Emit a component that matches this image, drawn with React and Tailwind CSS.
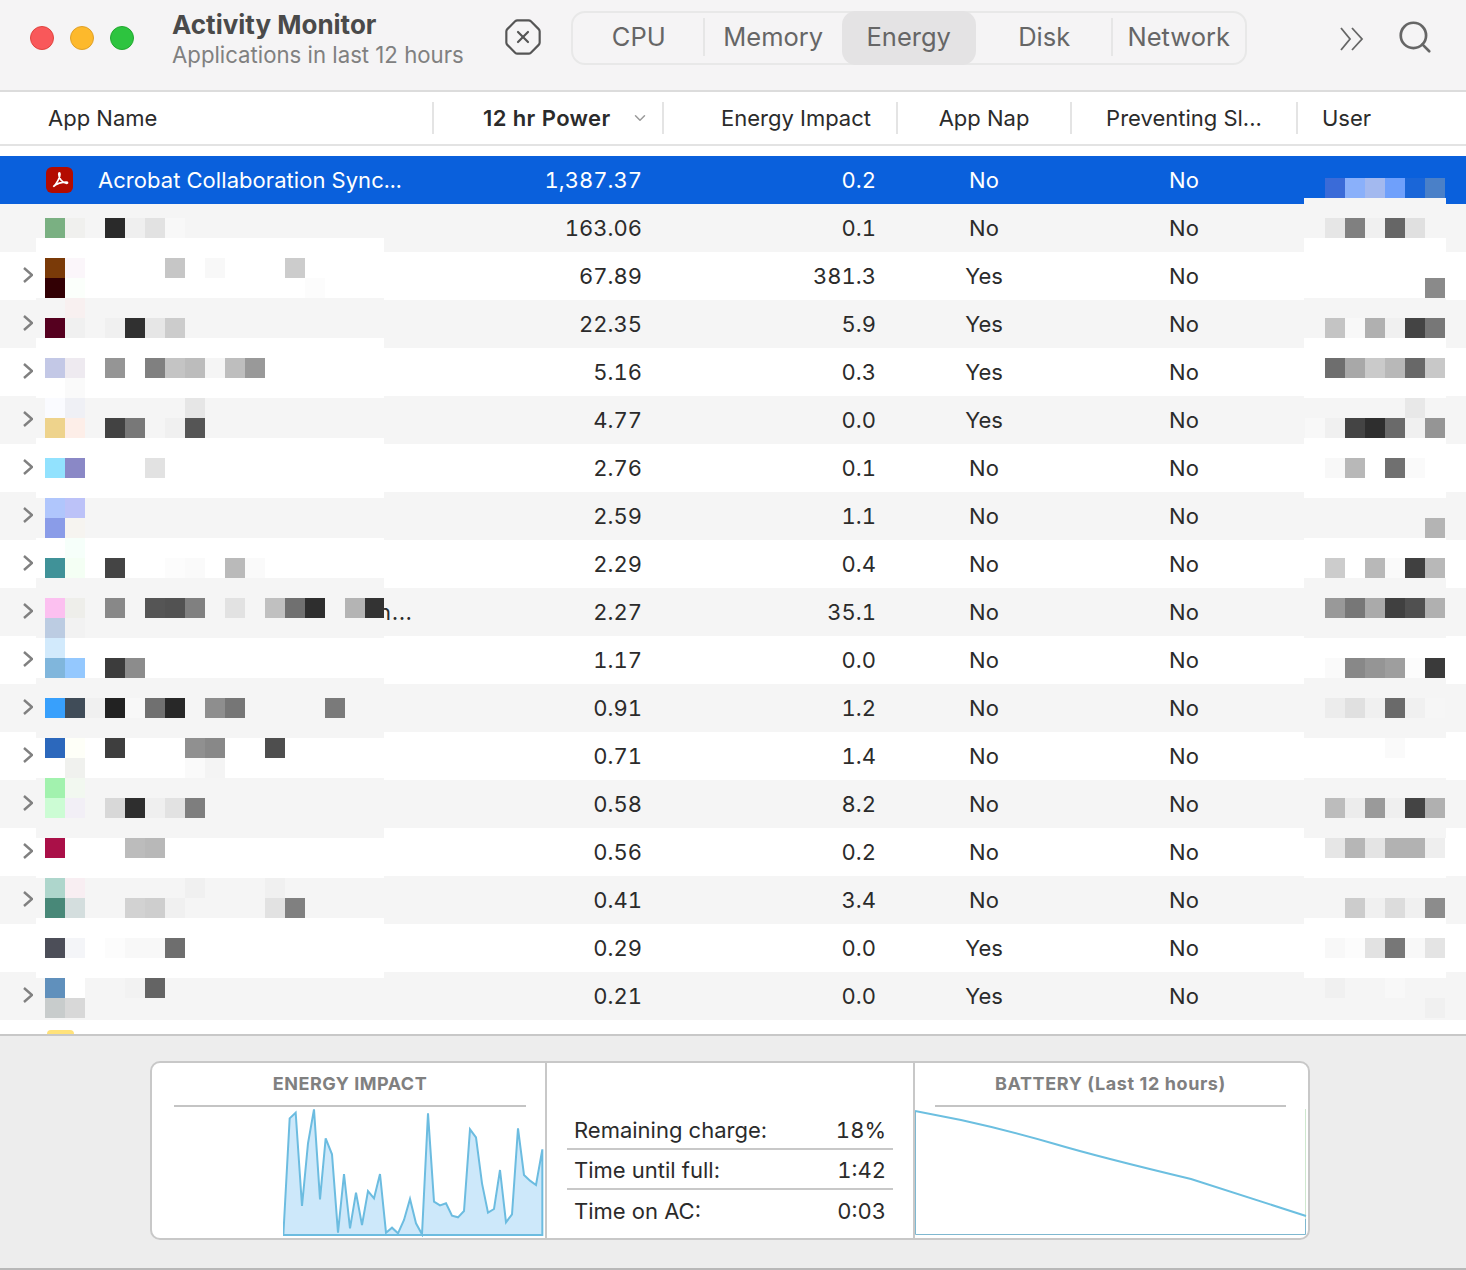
import { OctagonX, Search, ChevronDown } from 'lucide-react';

const rows = [
    { power: '163.06', impact: '0.1', nap: 'No', arrow: false },
    { power: '67.89', impact: '381.3', nap: 'Yes', arrow: true },
    { power: '22.35', impact: '5.9', nap: 'Yes', arrow: true },
    { power: '5.16', impact: '0.3', nap: 'Yes', arrow: true },
    { power: '4.77', impact: '0.0', nap: 'Yes', arrow: true },
    { power: '2.76', impact: '0.1', nap: 'No', arrow: true },
    { power: '2.59', impact: '1.1', nap: 'No', arrow: true },
    { power: '2.29', impact: '0.4', nap: 'No', arrow: true },
    { power: '2.27', impact: '35.1', nap: 'No', arrow: true, tail: 'n...' },
    { power: '1.17', impact: '0.0', nap: 'No', arrow: true },
    { power: '0.91', impact: '1.2', nap: 'No', arrow: true },
    { power: '0.71', impact: '1.4', nap: 'No', arrow: true },
    { power: '0.58', impact: '8.2', nap: 'No', arrow: true },
    { power: '0.56', impact: '0.2', nap: 'No', arrow: true },
    { power: '0.41', impact: '3.4', nap: 'No', arrow: true },
    { power: '0.29', impact: '0.0', nap: 'Yes', arrow: false },
    { power: '0.21', impact: '0.0', nap: 'Yes', arrow: true },
];

// the redacted names and users are a 20px mosaic, keyed by the y of each mosaic row
const grayBands = [198, 218, 298, 318, 398, 418, 498, 518, 578, 598, 618, 678, 698, 718, 778, 798, 818, 878, 898, 978, 998];

const leftMosaic = {
    218: { 0: '#7ab082', 1: '#f0f0ee', 3: '#2a2a2a', 4: '#efefef', 5: '#e2e2e2', 6: '#f8f8f8' },
    258: { 0: '#7a3a08', 1: '#fbf6fa', 6: '#c6c6c6', 8: '#f8f8f8', 12: '#cccccc' },
    278: { 0: '#320004', 1: '#fbfffb', 13: '#fcfcfc' },
    298: { 1: '#f8f0f0' },
    318: { 0: '#55001f', 1: '#f0f0f0', 3: '#f0f0f0', 4: '#303030', 5: '#e6e6e6', 6: '#cccccc' },
    358: { 0: '#c3c8e6', 1: '#eeeaf0', 3: '#959595', 5: '#808080', 6: '#c4c4c4', 7: '#bcbcbc', 8: '#f5f5f5', 9: '#bebebe', 10: '#999999' },
    378: { 1: '#fafafa' },
    398: { 0: '#fafbff', 1: '#eff0f5', 7: '#e6e6e6' },
    418: { 0: '#eed38c', 1: '#fdeee8', 3: '#424242', 4: '#787878', 5: '#f5f5f5', 6: '#f0f0f0', 7: '#555555' },
    458: { 0: '#92e2fe', 1: '#8a88c6', 5: '#e2e2e2' },
    498: { 0: '#b0c6fc', 1: '#bcc2f8' },
    518: { 0: '#8a9ce8', 1: '#f6f4f0' },
    538: { 1: '#f6fffa' },
    558: { 0: '#409298', 1: '#f4fff4', 3: '#444444', 6: '#fcfcfc', 7: '#fafafa', 9: '#bababa', 10: '#fafafa' },
    598: { 0: '#fcc0f0', 1: '#eeeeea', 3: '#888888', 5: '#555555', 6: '#525252', 7: '#808080', 9: '#e2e2e2', 11: '#c0c0c0', 12: '#707070', 13: '#2e2e2e', 15: '#b4b4b4', 16: '#333333' },
    618: { 0: '#bccce2', 1: '#f2f2f2' },
    638: { 0: '#d2eafc' },
    658: { 0: '#80b6dc', 1: '#94c8fe', 3: '#3c3c3c', 4: '#8c8c8c' },
    698: { 0: '#38a0fc', 1: '#404c58', 2: '#f0f0f0', 3: '#222222', 4: '#f8f8f8', 5: '#707070', 6: '#282828', 8: '#8e8e8e', 9: '#767676', 14: '#7a7a7a' },
    738: { 0: '#2c68bc', 1: '#fefff8', 3: '#3e3e3e', 7: '#909090', 8: '#888888', 11: '#4e4e4e' },
    758: { 1: '#f0f1ee', 7: '#fafafa', 8: '#f4f4f4' },
    778: { 0: '#a2f2ae', 1: '#f2f8f0' },
    798: { 0: '#ccfcd4', 1: '#f2eff6', 3: '#d8d8d8', 4: '#2e2e2e', 5: '#efefef', 6: '#e2e2e2', 7: '#7e7e7e' },
    838: { 0: '#aa1048', 4: '#bcbcbc', 5: '#b8b8b8' },
    878: { 0: '#aed6cc', 1: '#f8eef2', 7: '#f0f0f0', 11: '#f0f0f0' },
    898: { 0: '#488878', 1: '#d4dede', 4: '#d2d2d2', 5: '#cecece', 6: '#f0f0f0', 11: '#e2e2e2', 12: '#808080' },
    938: { 0: '#4c4e58', 1: '#f4f5f8', 3: '#fcfcfc', 4: '#f8f8f8', 5: '#f8f8f8', 6: '#6e6e6e' },
    978: { 0: '#6090bc', 1: '#ffffff', 4: '#f2f2f2', 5: '#646464' },
    998: { 0: '#c8cccc', 1: '#d8d8d8' },
};

const rightMosaic = {
    178: { 1: '#3a6bd8', 2: '#8ab0fa', 3: '#a3b9ef', 4: '#6fa0fb', 5: '#1a66d8', 6: '#4a80c8' },
    218: { 1: '#e6e6e6', 2: '#808080', 3: '#f0f0f0', 4: '#666666', 5: '#e0e0e0' },
    278: { 6: '#8a8a8a' },
    318: { 1: '#c4c4c4', 2: '#f8f8f8', 3: '#b0b0b0', 4: '#f0f0f0', 5: '#444444', 6: '#777777' },
    358: { 1: '#6e6e6e', 2: '#a8a8a8', 3: '#cacaca', 4: '#b8b8b8', 5: '#686868', 6: '#c8c8c8' },
    398: { 5: '#e8e8e8' },
    418: { 0: '#f8f8f8', 1: '#f0f0f0', 2: '#444444', 3: '#2e2e2e', 4: '#6a6a6a', 5: '#f0f0f0', 6: '#959595' },
    458: { 1: '#f8f8f8', 2: '#b8b8b8', 4: '#707070', 5: '#fafafa' },
    518: { 6: '#b4b4b4' },
    558: { 1: '#cccccc', 3: '#b8b8b8', 4: '#fafafa', 5: '#404040', 6: '#b8b8b8' },
    598: { 1: '#999999', 2: '#777777', 3: '#aaaaaa', 4: '#404040', 5: '#505050', 6: '#b0b0b0' },
    658: { 1: '#fafafa', 2: '#888888', 3: '#959595', 4: '#9e9e9e', 5: '#fcfcfc', 6: '#3a3a3a' },
    698: { 1: '#ececec', 2: '#e0e0e0', 3: '#f0f0f0', 4: '#6a6a6a', 5: '#f0f0f0', 6: '#f6f6f6' },
    738: { 4: '#fafafa' },
    798: { 1: '#bcbcbc', 2: '#ececec', 3: '#9a9a9a', 4: '#efefef', 5: '#444444', 6: '#b0b0b0' },
    838: { 1: '#e6e6e6', 2: '#b6b6b6', 3: '#e4e4e4', 4: '#b2b2b2', 5: '#b2b2b2', 6: '#eeeeee' },
    898: { 2: '#cccccc', 3: '#f0f0f0', 4: '#dcdcdc', 5: '#f0f0f0', 6: '#8c8c8c' },
    938: { 1: '#f8f8f8', 2: '#fcfcfc', 3: '#e2e2e2', 4: '#777777', 5: '#f8f8f8', 6: '#e4e4e4' },
    978: { 1: '#f0f0f0', 4: '#f8f8f8' },
    998: { 6: '#f0f0f0' },
};

const energyPoints = '433,555 452,205 470,188 489,468 507,280 525,178 543,448 560,265 579,313 597,548 615,372 633,535 651,428 669,525 687,423 705,445 723,372 741,548 759,533 777,550 795,510 813,447 831,520 849,553 867,190 885,455 903,466 921,460 939,497 957,502 975,483 993,238 1011,262 1029,400 1047,488 1065,477 1083,360 1101,517 1119,493 1137,235 1155,375 1173,392 1191,405 1210,298 1210,555';

const Mosaic = ({ cells, from, to, count, className, padClass }) => {
    const ys = [];
    for (let y = from; y < to; y += 20) ys.push(y);
    return (
        <div className={className}>
            {ys.map(y => (
                <div key={y} className={`flex h-5 ${padClass} ${y < 198 ? '' : grayBands.includes(y) ? 'bg-[#f5f5f5]' : 'bg-white'}`}>
                    {Array.from({ length: count }, (_, i) => (
                        <div key={i} className="w-5 h-5 shrink-0" style={{ backgroundColor: cells[y]?.[i] }} />
                    ))}
                </div>
            ))}
        </div>
    );
};

const Arrow = () => (
    <svg width="10" height="16" viewBox="0 0 10 16" className="block -mt-0.5">
        <path d="M1 1l8 7-8 7" fill="none" stroke="#808080" strokeWidth="2.400" />
    </svg>
);

const Row = ({ row, striped }) => (
    <div className={`flex h-12 items-center text-[22px] tabular-nums text-[#2b2b2b] ${striped ? 'bg-[#f5f5f5]' : 'bg-white'}`}>
        <div className="w-[433px] pl-[23px] flex items-center whitespace-nowrap">
            <div className="w-[10px]">{row.arrow && <Arrow />}</div>
            {row.tail && <span className="pl-[345px] tracking-[1px]">{row.tail}</span>}
        </div>
        <div className="w-[230px] pr-[21px] text-right">{row.power}</div>
        <div className="w-[234px] pr-[21px] text-right">{row.impact}</div>
        <div className="w-[174px] text-center">{row.nap}</div>
        <div className="w-[226px] text-center">No</div>
    </div>
);

const HeaderCell = ({ className, children }) => (
    <div className={`h-8 flex items-center border-r-2 border-[#e4e4e4] ${className}`}>{children}</div>
);

const Tab = ({ label, active, divider, className }) => (
    <div className={`relative flex items-center justify-center pb-0.5 text-[25.5px] text-[#666666] ${className} ${active ? 'bg-[#e4e3e4] rounded-[14px] -my-0.5' : ''}`}>
        {label}
        {divider && <span className="absolute right-0 top-[5px] bottom-[7px] w-0.5 bg-[#e6e6e6]" />}
    </div>
);

const StatRow = ({ label, value, line }) => (
    <div className={`h-10 flex items-center justify-between pl-[7px] pr-[7px] pt-0.5 ${line ? 'border-b-2 border-[#c8c8c8]' : ''}`}>
        <span>{label}</span>
        <span className="tabular-nums">{value}</span>
    </div>
);

export default function App() {
    return (
        <div className="w-[1466px] h-[1270px] overflow-hidden bg-white font-['Inter',sans-serif]">
            {/* Toolbar */}
            <div className="h-[92px] bg-[#f5f4f5] border-b-2 border-[#dcdcdc] flex">
                <div className="flex gap-4 pl-[30px] pt-[26px]">
                    <span className="w-6 h-6 rounded-full bg-[#f9585a] border border-[#e0443e]" />
                    <span className="w-6 h-6 rounded-full bg-[#fdb92c] border border-[#e0a028]" />
                    <span className="w-6 h-6 rounded-full bg-[#2dc43f] border border-[#22a82f]" />
                </div>
                <div className="ml-[38px] pt-[8px]">
                    <div className="text-[26px] leading-[34px] font-bold text-[#4a4a4a]">Activity Monitor</div>
                    <div className="text-[22.2px] leading-[26px] text-[#808080]">Applications in last 12 hours</div>
                </div>
                <OctagonX size={40} strokeWidth={1.3} className="ml-[39px] mt-[17px] text-[#555555]" />
                <div className="ml-[28px] mt-[11px] w-[676px] h-[54px] flex border-2 border-[#e8e8e8] rounded-[14px]">
                    <Tab label="CPU" divider className="w-[132px]" />
                    <Tab label="Memory" className="w-[137px]" />
                    <Tab label="Energy" active className="w-[134px]" />
                    <Tab label="Disk" divider className="w-[137px]" />
                    <Tab label="Network" className="flex-1" />
                </div>
                <svg width="26" height="24" viewBox="0 0 26 24" className="ml-[92px] mt-[27px] text-[#666666]">
                    <path d="M2 1l9 11-9 11M13 1l10 11-10 11" fill="none" stroke="currentColor" strokeWidth="1.8" />
                </svg>
                <Search size={38} strokeWidth={1.7} className="ml-[31px] mt-[18px] text-[#666666]" />
            </div>

            {/* Column headers */}
            <div className="h-[54px] border-b-2 border-[#e3e3e3] flex items-center text-[22px] text-[#2b2b2b]">
                <HeaderCell className="w-[434px] pl-[48px]">App Name</HeaderCell>
                <HeaderCell className="w-[230px] pl-[49px] font-semibold tracking-[0.4px]">
                    12 hr Power
                    <ChevronDown size={18} strokeWidth={2} className="ml-[20px] text-[#9a9a9a]" />
                </HeaderCell>
                <HeaderCell className="w-[234px] justify-end pr-[25px]">Energy Impact</HeaderCell>
                <HeaderCell className="w-[174px] justify-center">App Nap</HeaderCell>
                <HeaderCell className="w-[226px] justify-center">Preventing Sl...</HeaderCell>
                <div className="pl-[24px]">User</div>
            </div>

            {/* Process list */}
            <div className="relative h-[890px] pt-[10px] border-b-2 border-[#c8c8c8]">
                <div className="flex h-12 items-center text-[22px] tabular-nums text-white bg-[#0a60dc]">
                    <div className="w-[433px] pl-[46px] flex items-center gap-[25px] whitespace-nowrap">
                        <div className="w-[27px] h-[26px] rounded-md bg-[#b30b00] flex items-center justify-center">
                            <svg width="20" height="20" viewBox="0 0 24 24">
                                <path d="M4 20C8 17 12 9 12 5c0-2-1.500-2-1.500 0C10.500 10 15 16 20 16c1.500 0 1.500-1.500-.500-1.500C15 14.500 7 16 4 20z" fill="none" stroke="white" strokeWidth="2" />
                            </svg>
                        </div>
                        <span className="tracking-[0.06px]">Acrobat Collaboration Sync...</span>
                    </div>
                    <div className="w-[230px] pr-[21px] text-right">1,387.37</div>
                    <div className="w-[234px] pr-[21px] text-right">0.2</div>
                    <div className="w-[174px] text-center">No</div>
                    <div className="w-[226px] text-center">No</div>
                </div>
                {rows.map((row, i) => <Row key={row.power} row={row} striped={i % 2 === 0} />)}

                {/* Mosaics lie over the names and users */}
                <Mosaic cells={leftMosaic} from={218} to={1018} count={17} padClass="pl-[9px]" className="absolute left-[36px] top-[72px] w-[348px] overflow-hidden" />
                <Mosaic cells={rightMosaic} from={178} to={1018} count={7} padClass="pl-px" className="absolute left-[1304px] top-[32px] w-[142px] overflow-hidden" />
                <div className="absolute left-[47px] top-[884px] w-[27px] h-1 rounded-t-md bg-[#ffe27a]" />
            </div>

            {/* Bottom panel */}
            <div className="h-[234px] bg-[#ededed] pt-[25px] pl-[150px] border-b-2 border-[#b8b8b8]">
                <div className="w-[1160px] h-[179px] flex bg-white border-2 border-[#c8c8c8] rounded-[10px] overflow-hidden">
                    <div className="w-[395px] shrink-0 border-r-2 border-[#c8c8c8]">
                        <div className="h-[44px] pb-0.5 flex items-center justify-center text-[18px] font-bold tracking-[0.5px] text-[#808080] border-b-2 border-[#c4c4c4] ml-[22px] mr-[19px]">ENERGY IMPACT</div>
                        <svg width="262" height="130" viewBox="432 171 786 390" className="block ml-[131px]">
                            <polygon points={energyPoints} fill="#cde8fa" stroke="#6cbce0" strokeWidth="6" />
                        </svg>
                    </div>
                    <div className="w-[368px] shrink-0 border-r-2 border-[#c8c8c8] px-5 pt-[47px] text-[22px] text-[#2b2b2b]">
                        <StatRow label="Remaining charge:" value="18%" line />
                        <StatRow label="Time until full:" value="1:42" line />
                        <StatRow label="Time on AC:" value="0:03" />
                    </div>
                    <div className="flex-1">
                        <div className="h-[44px] pb-0.5 flex items-center justify-center text-[18px] font-bold tracking-[0.6px] text-[#808080] border-b-2 border-[#c4c4c4] ml-5 mr-[22px]">BATTERY (Last 12 hours)</div>
                        <svg width="392" height="130" viewBox="0 0 392 130" className="block">
                            <path d="M390.500 2V112" fill="none" stroke="#cfe8cf" strokeWidth="1" />
                            <path d="M.5 4V127.500H390.500V112" fill="none" stroke="#7fb8d0" strokeWidth="1" />
                            <path d="M0 4L46 13Q96 24 140 37T276 72L391 109" fill="none" stroke="#6cbfe0" strokeWidth="2" />
                        </svg>
                    </div>
                </div>
            </div>
        </div>
    );
}
